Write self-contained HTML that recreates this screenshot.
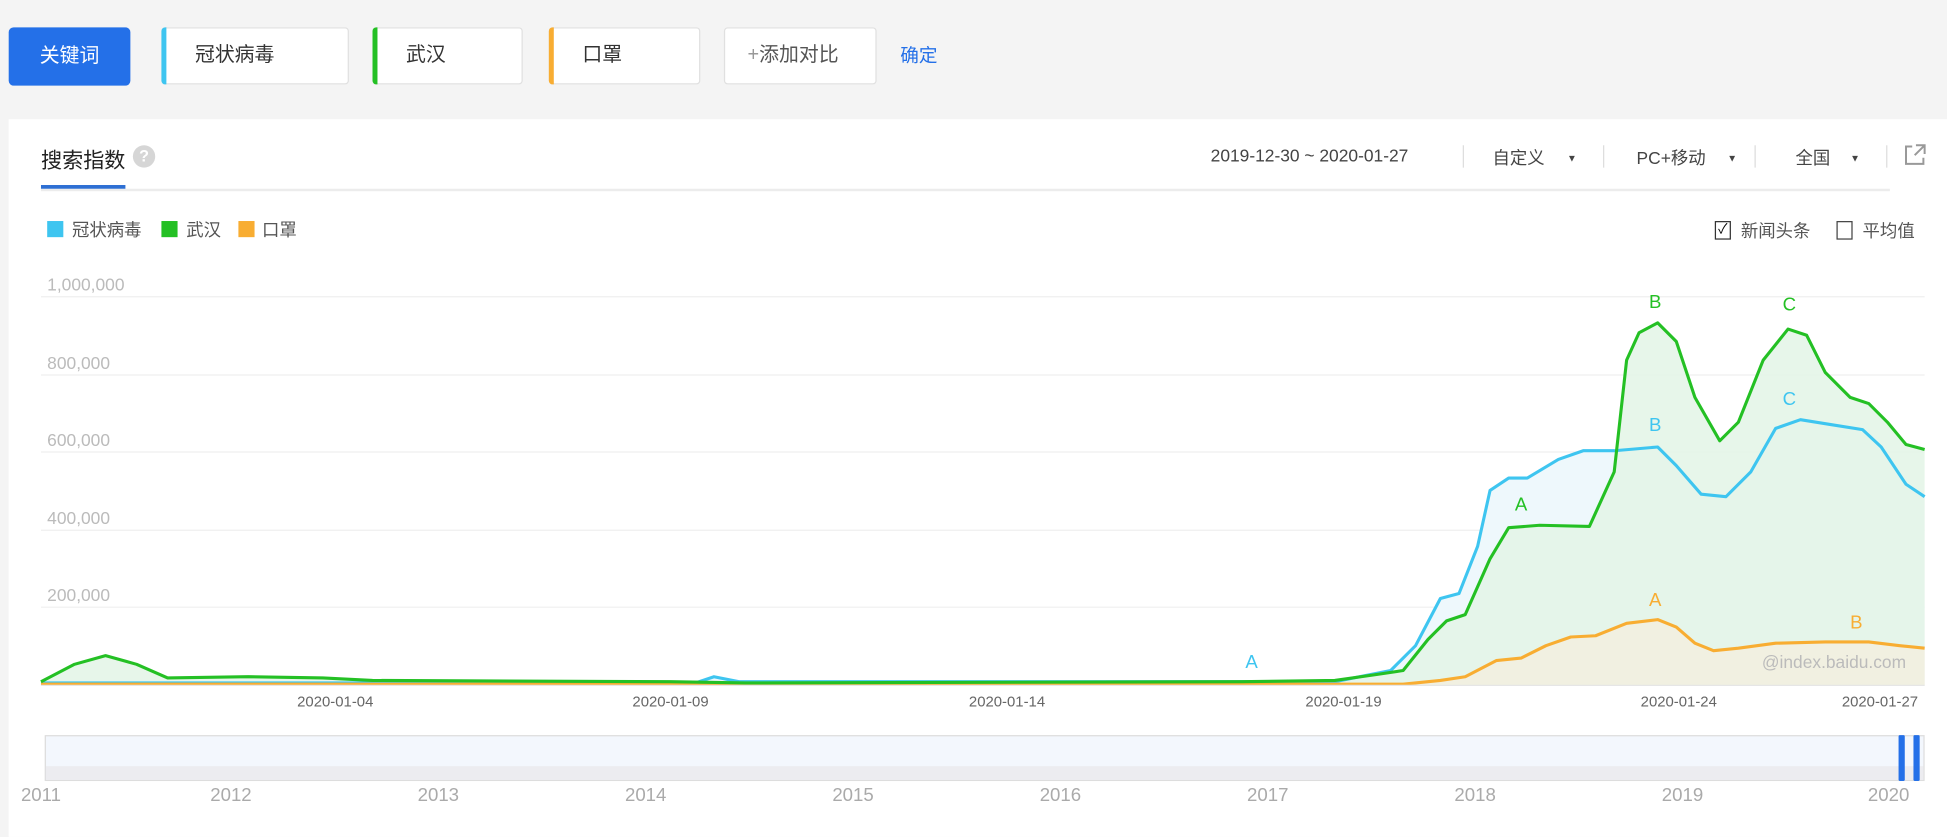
<!DOCTYPE html>
<html><head><meta charset="utf-8"><style>
body{margin:0;width:1947px;height:836px;background:#f4f4f4;font-family:"Liberation Sans","Noto Sans CJK SC",sans-serif;overflow:hidden}
#w{position:absolute;left:0;top:0;width:1568px;height:674px;transform:scale(1.2417);transform-origin:0 0}
.a{position:absolute}
.kw{position:absolute;top:22px;height:46px;background:#fff;border:1px solid #e0e0e0;border-radius:3px;box-sizing:border-box;font-size:16px;color:#333;line-height:44px;padding-left:26px}
.kw i{position:absolute;left:-1px;top:-1px;bottom:-1px;width:4px;border-radius:3px 0 0 3px}
.t{position:absolute;font-size:14px;color:#444;white-space:nowrap}
.sep{position:absolute;top:117px;width:1px;height:18px;background:#ddd}
.yr{position:absolute;top:632px;font-size:15px;color:#aaa;transform:translateX(-50%)}
.dt{position:absolute;top:558px;font-size:12px;color:#666;transform:translateX(-50%);white-space:nowrap}
.yl{position:absolute;left:38px;font-size:14px;color:#bbb}
.ar{position:absolute;top:123px;font-size:8px;color:#444}
</style></head><body><div id="w">
<div class="a" style="left:7px;top:22px;width:98px;height:47px;background:#2470e8;border-radius:4px;color:#fff;font-size:16px;text-align:center;line-height:47px">关键词</div>
<div class="kw" style="left:130px;width:151px"><i style="background:#3ec5f0"></i>冠状病毒</div>
<div class="kw" style="left:300px;width:121px"><i style="background:#24c024"></i>武汉</div>
<div class="kw" style="left:442px;width:122px"><i style="background:#f8ad32"></i>口罩</div>
<div class="kw" style="left:583px;width:123px;color:#555;padding-left:18px"><span style="color:#999">+</span>添加对比</div>
<div class="t" style="left:725px;top:34px;color:#2470e8;font-size:15px">确定</div>
<div class="a" style="left:7px;top:96px;width:1561px;height:578px;background:#fff"></div>
<div class="t" style="left:33px;top:115px;font-size:17px;color:#222">搜索指数</div>
<div class="a" style="left:107px;top:117px;width:18px;height:18px;border-radius:50%;background:#d6d6d6;color:#fff;font-size:13px;text-align:center;line-height:18px;font-weight:bold">?</div>
<div class="a" style="left:33px;top:152px;width:1489px;height:2px;background:#ececec"></div>
<div class="a" style="left:33px;top:149px;width:68px;height:3px;background:#2d6fd3"></div>
<div class="t" style="left:975px;top:117px">2019-12-30 ~ 2020-01-27</div>
<div class="sep" style="left:1178px"></div><div class="sep" style="left:1291px"></div><div class="sep" style="left:1413px"></div><div class="sep" style="left:1519px"></div>
<div class="t" style="left:1202px;top:117px">自定义</div><div class="ar" style="left:1262px">▼</div>
<div class="t" style="left:1318px;top:117px">PC+移动</div><div class="ar" style="left:1391px">▼</div>
<div class="t" style="left:1446px;top:117px">全国</div><div class="ar" style="left:1490px">▼</div>
<svg class="a" style="left:1532px;top:115px" width="20" height="20" viewBox="0 0 20 20"><path d="M8 3H3v14h14v-5M11 2h7v7M18 2l-8 8" fill="none" stroke="#999" stroke-width="1.6"/></svg>
<div class="a" style="left:38px;top:178px;width:13px;height:13px;background:#3ec5f0"></div><div class="t" style="left:58px;top:175px;color:#555">冠状病毒</div>
<div class="a" style="left:130px;top:178px;width:13px;height:13px;background:#24c024"></div><div class="t" style="left:150px;top:175px;color:#555">武汉</div>
<div class="a" style="left:192px;top:178px;width:13px;height:13px;background:#f8ad32"></div><div class="t" style="left:211px;top:175px;color:#555">口罩</div>
<div class="a" style="left:1381px;top:178px;width:11px;height:13px;border:1.5px solid #333;font-size:11px;line-height:13px;text-align:center">✓</div><div class="t" style="left:1402px;top:176px;color:#555">新闻头条</div>
<div class="a" style="left:1479px;top:178px;width:11px;height:13px;border:1.5px solid #444"></div><div class="t" style="left:1500px;top:176px;color:#555">平均值</div>
<div class="yl" style="top:221px">1,000,000</div><div class="yl" style="top:284px">800,000</div><div class="yl" style="top:346px">600,000</div><div class="yl" style="top:409px">400,000</div><div class="yl" style="top:471px">200,000</div>
<svg class="a" style="left:0;top:0" width="1568" height="674">
<g stroke="#efefef" stroke-width="1"><line x1="33" y1="239" x2="1550" y2="239"/><line x1="33" y1="302" x2="1550" y2="302"/><line x1="33" y1="364" x2="1550" y2="364"/><line x1="33" y1="427" x2="1550" y2="427"/><line x1="33" y1="489" x2="1550" y2="489"/></g>
<path d="M33 550L560 550L575 545L595 549L1075 549L1120 540L1140 520L1160 482L1175 478L1190 440L1200 395L1215 385L1230 385L1255 370L1275 363L1300 363L1335 360L1350 375L1370 398L1390 400L1410 380L1430 345L1450 338L1475 342L1500 346L1515 360L1535 390L1550 400L1550 552L33 552Z" fill="#eef8fc"/>
<path d="M33 549L60 535L85 528L110 535L135 546L200 545L260 546L300 548L540 549L600 550L1000 549L1075 548L1110 543L1130 540L1150 515L1165 500L1180 495L1200 450L1215 425L1240 423L1280 424L1300 380L1310 290L1320 268L1335 260L1350 275L1365 320L1385 355L1400 340L1420 290L1440 265L1455 270L1470 300L1490 320L1505 325L1520 340L1535 358L1550 362L1550 552L33 552Z" fill="#e3f5e6" opacity="0.85"/>
<path d="M33 550L560 550L575 545L595 549L1075 549L1120 540L1140 520L1160 482L1175 478L1190 440L1200 395L1215 385L1230 385L1255 370L1275 363L1300 363L1335 360L1350 375L1370 398L1390 400L1410 380L1430 345L1450 338L1475 342L1500 346L1515 360L1535 390L1550 400" fill="none" stroke="#3ec5f0" stroke-width="2.5" stroke-linejoin="round"/>
<path d="M33 551L1130 551L1160 548L1180 545L1205 532L1225 530L1245 520L1265 513L1285 512L1310 502L1335 499L1350 505L1365 518L1380 524L1400 522L1430 518L1470 517L1505 517L1530 520L1550 522L1550 552L33 552Z" fill="#f4efde" opacity="0.8"/>
<path d="M33 551L1130 551L1160 548L1180 545L1205 532L1225 530L1245 520L1265 513L1285 512L1310 502L1335 499L1350 505L1365 518L1380 524L1400 522L1430 518L1470 517L1505 517L1530 520L1550 522" fill="none" stroke="#f8ad32" stroke-width="2.5" stroke-linejoin="round"/>
<path d="M33 549L60 535L85 528L110 535L135 546L200 545L260 546L300 548L540 549L600 550L1000 549L1075 548L1110 543L1130 540L1150 515L1165 500L1180 495L1200 450L1215 425L1240 423L1280 424L1300 380L1310 290L1320 268L1335 260L1350 275L1365 320L1385 355L1400 340L1420 290L1440 265L1455 270L1470 300L1490 320L1505 325L1520 340L1535 358L1550 362" fill="none" stroke="#24c024" stroke-width="2.5" stroke-linejoin="round"/>
<line x1="33" y1="552" x2="1550" y2="552" stroke="#e6e6e6"/>
<g font-family="Liberation Sans" font-size="15" text-anchor="middle">
<text x="1008" y="538" fill="#3ec5f0">A</text><text x="1333" y="347" fill="#3ec5f0">B</text><text x="1441" y="326" fill="#3ec5f0">C</text>
<text x="1225" y="411" fill="#24c024">A</text><text x="1333" y="248" fill="#24c024">B</text><text x="1441" y="250" fill="#24c024">C</text>
<text x="1333" y="488" fill="#f8ad32">A</text><text x="1495" y="506" fill="#f8ad32">B</text>
<text x="1477" y="538" fill="#bbb" font-size="14">@index.baidu.com</text></g>
<rect x="36.5" y="592.5" width="1513" height="36" fill="#f3f7fd" stroke="#ddd"/>
<rect x="37" y="617" width="1512" height="11" fill="#ececf0"/>
<rect x="1529" y="592" width="5" height="37" fill="#2470e8" rx="1"/><rect x="1541" y="592" width="5" height="37" fill="#2470e8" rx="1"/>
</svg>
<div class="dt" style="left:270px">2020-01-04</div><div class="dt" style="left:540px">2020-01-09</div><div class="dt" style="left:811px">2020-01-14</div><div class="dt" style="left:1082px">2020-01-19</div><div class="dt" style="left:1352px">2020-01-24</div><div class="dt" style="left:1514px">2020-01-27</div>
<div class="yr" style="left:33px">2011</div><div class="yr" style="left:186px">2012</div><div class="yr" style="left:353px">2013</div><div class="yr" style="left:520px">2014</div><div class="yr" style="left:687px">2015</div><div class="yr" style="left:854px">2016</div><div class="yr" style="left:1021px">2017</div><div class="yr" style="left:1188px">2018</div><div class="yr" style="left:1355px">2019</div><div class="yr" style="left:1521px">2020</div>
</div></body></html>
